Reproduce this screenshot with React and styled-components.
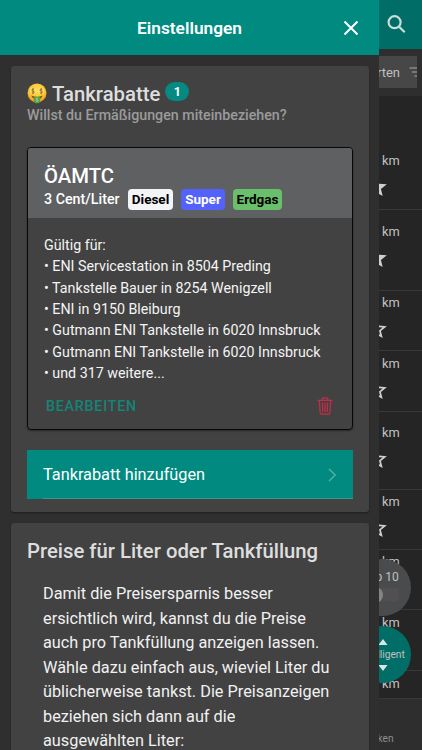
import React from "react";
import styled, { createGlobalStyle } from "styled-components";

const Global = createGlobalStyle`
  * { box-sizing: border-box; }
  body { margin: 0; background: #2e2e2e; font-family: Roboto, sans-serif; color: #fff; overflow: hidden; }
  h1, h2, h3, p, ul { margin: 0; padding: 0; font-weight: 400; }
  svg { display: block; flex: none; }
`;

const Screen = styled.div`
  display: grid;
  grid-template-columns: 379px 43px;
  width: 422px;
  height: 750px;
  overflow: hidden;
`;
const Drawer = styled.aside`
  display: flex;
  flex-direction: column;
  min-width: 0;
  height: 750px;
  overflow: hidden;
  background: #2f2f2f;
`;
const DrawerBar = styled.header`
  flex: none;
  display: grid;
  grid-template-columns: 56px 1fr 56px;
  align-items: center;
  height: 55px;
  background: #008a80;
`;
const BarTitle = styled.h1`
  grid-column: 2;
  text-align: center;
  font-size: 17.3px;
  line-height: 24px;
  && { font-weight: 600; }
`;
const CloseButton = styled.button`
  display: flex;
  justify-content: center;
  padding: 0;
  border: 0;
  background: none;
  color: #fff;
`;
const Cards = styled.main`
  display: flex;
  flex-direction: column;
  gap: 11px;
  padding: 11px 10px 0 11px;
`;
const Card = styled.section`
  flex: none;
  height: ${(p) => p.$height}px;
  padding: ${(p) => p.$top}px 16px 0;
  border-radius: 3px;
  background: #424242;
  box-shadow: 0 1px 2px rgba(0, 0, 0, 0.4);
`;
const TitleRow = styled.div`
  display: flex;
  height: 24px;
`;
const Title = styled.h2`
  white-space: nowrap;
  font-size: 20.3px;
  line-height: 24px;
  color: #dedede;
  && { font-weight: 500; }
`;
const EmojiSlot = styled.span`
  padding: 1px 5px 0 0;
`;
const Count = styled.span`
  width: 24px;
  height: 19px;
  margin-left: 5px;
  border-radius: 10px;
  background: #048a80;
  text-align: center;
  font-size: 12.5px;
  font-weight: 700;
  line-height: 19px;
`;
const Subtitle = styled.p`
  font-size: 14.25px;
  line-height: 18px;
  color: #9b9b9b;
  && { font-weight: 500; }
`;
const Discount = styled.article`
  height: 283px;
  margin-top: 23px;
  border: 1px solid #080808;
  border-radius: 4px;
  overflow: hidden;
  box-shadow: 0 1px 2px rgba(0, 0, 0, 0.4);
`;
const DiscountHead = styled.div`
  height: 70px;
  padding: 16px 16px 0;
  background: #5f6062;
`;
const DiscountName = styled.h3`
  font-size: 20.3px;
  line-height: 24px;
  && { font-weight: 500; }
`;
const RateRow = styled.div`
  display: flex;
  align-items: center;
  height: 22px;
`;
const Rate = styled.span`
  width: 84px;
  font-size: 14.25px;
  font-weight: 500;
  white-space: nowrap;
`;
const Fuel = styled.span`
  width: ${(p) => p.$width}px;
  height: 21px;
  margin-right: 8px;
  border-radius: 4px;
  background: ${(p) => p.$bg};
  color: ${(p) => p.$color};
  text-align: center;
  font-size: 13.5px;
  font-weight: 700;
  line-height: 21px;
`;
const Stations = styled.div`
  padding: 17px 16px 0;
  white-space: nowrap;
  font-size: 14.25px;
  line-height: 21.35px;
  color: #f4f4f4;
`;
const Actions = styled.div`
  display: flex;
  justify-content: space-between;
  align-items: center;
  height: 44px;
  padding: 0 19px 0 18px;
`;
const EditButton = styled.button`
  padding: 0;
  border: 0;
  background: none;
  color: #148478;
  font: 500 14.25px Roboto, sans-serif;
  letter-spacing: 0.78px;
`;
const AddButton = styled.button`
  display: flex;
  justify-content: space-between;
  align-items: center;
  width: 100%;
  height: 49px;
  margin-top: 20px;
  padding: 0 16px;
  border: 0;
  background: linear-gradient(#35998f, #35998f) 16px 100% / 100% 1px no-repeat #008a80;
  color: #fff;
  font: 400 16.3px Roboto, sans-serif;
`;
const Explanation = styled.p`
  padding: 19px 0 0 16px;
  white-space: nowrap;
  font-size: 16.3px;
  line-height: 24.5px;
  color: #f1f1f1;
`;
const Behind = styled.div`
  position: relative;
  display: flex;
  flex-direction: column;
  min-width: 0;
  height: 750px;
  overflow: hidden;
  background: #252525;
  color: #c0c0c0;
`;
const SearchBar = styled.div`
  flex: none;
  height: 49px;
  padding: 13px 0 0 6px;
  background: #006e66;
`;
const FilterBar = styled.div`
  flex: none;
  height: 47px;
  padding: 7px 5px 0 0;
  background: #2e2e2e;
`;
const FilterButton = styled.div`
  display: flex;
  justify-content: space-between;
  align-items: center;
  height: 32px;
  overflow: hidden;
  background: #474747;
  font-size: 13px;
`;
const FilterLabel = styled.span`
  margin-left: -2px;
`;
const ResultRow = styled.div`
  flex: none;
  display: flex;
  flex-direction: column;
  height: ${(p) => p.$height}px;
  padding-top: ${(p) => p.$top}px;
  overflow: hidden;
  border-bottom: 1px solid #383838;
`;
const Distance = styled.span`
  flex: none;
  padding-left: 3px;
  font-size: 12.8px;
  line-height: 16px;
`;
const StarSlot = styled.span`
  flex: none;
  margin: 5.5px 0 0 -16px;
  color: #cfcfcf;
`;
const Footer = styled.div`
  flex: 1;
  padding-top: 33px;
  background: #2e2e2e;
  color: #8f8f8f;
  font-size: 10.2px;
  line-height: 14px;
`;
const FooterLabel = styled.span`
  margin-left: -1.5px;
`;
const FloatingButton = styled.div`
  position: absolute;
  top: ${(p) => p.$top}px;
  left: -25px;
  display: flex;
  flex-direction: column;
  align-items: center;
  justify-content: center;
  gap: ${(p) => p.$gap}px;
  width: 57px;
  height: 57px;
  border-radius: 50%;
  background: ${(p) => p.$bg};
  white-space: nowrap;
  font-size: ${(p) => p.$size}px;
  line-height: 14px;
`;
const TopLabel = styled.span`
  margin: -4px 0 0 -4px;
`;
const Track = styled.span`
  display: flex;
  align-items: center;
  width: 32px;
  height: 13px;
  border-radius: 4px;
  background: #514f4f;
`;
const Thumb = styled.span`
  width: 16px;
  height: 16px;
  border-radius: 50%;
  background: #858585;
`;

const MoneyFace = () => (
  <svg width="20" height="21" viewBox="0 0 20 21">
    <defs>
      <radialGradient id="face" cx="50%" cy="35%" r="65%">
        <stop offset="0" stopColor="#ffe052" />
        <stop offset=".7" stopColor="#fbc02f" />
        <stop offset="1" stopColor="#e58c19" />
      </radialGradient>
    </defs>
    <circle cx="10" cy="10" r="9.5" fill="url(#face)" />
    <ellipse cx="5.9" cy="8.1" rx="2.9" ry="3.2" fill="#ffe375" />
    <ellipse cx="14.1" cy="8.1" rx="2.9" ry="3.2" fill="#ffe375" />
    <g fill="none" stroke="#8a6420" strokeWidth=".85">
      <path d="M7.3 6.8C6.6 5.8 4.7 6 4.7 7.1c0 1.4 2.6.7 2.6 2.1 0 1.2-2 1.3-2.7.3M6 5v6.2" />
      <path d="M15.5 6.8c-.7-1-2.6-.8-2.6.3 0 1.4 2.6.7 2.6 2.1 0 1.2-2 1.3-2.7.3M14.2 5v6.2" />
    </g>
    <path d="M4.3 12.6q5.7 2.4 11.4 0-1.4 3.9-5.7 3.9t-5.7-3.9z" fill="#8a4a14" />
    <path d="M6.9 13.7q3.1.8 6.2 0v4.3q0 2.3-3.1 2.3T6.9 18z" fill="#4fa44a" />
    <path d="M11.2 15.5c-.8-.7-2.3-.4-2.2.5.1 1 2.2.5 2.2 1.5 0 .9-1.6 1-2.3.3" fill="none" stroke="#b5df8b" strokeWidth=".8" />
  </svg>
);

const Close = () => (
  <svg width="16" height="16" viewBox="0 0 16 16" fill="none" stroke="currentColor" strokeWidth="2">
    <path d="M1.5 1.5l13 13M14.5 1.5l-13 13" />
  </svg>
);

const Trash = () => (
  <svg width="16" height="18" viewBox="0 0 16 18" fill="none" stroke="#c52c4c" strokeWidth="1.25" strokeLinecap="round" strokeLinejoin="round">
    <path d="M1 3.4h14M5.2 3.2V1.8Q5.2.9 6.1.9h3.8q.9 0 .9.9v1.4M2.3 3.6l.8 12q.1 1.5 1.5 1.5h6.8q1.4 0 1.5-1.5l.8-12M5.4 6l.3 8.6M8 6v8.6M10.6 6l-.3 8.6" />
  </svg>
);

const Chevron = () => (
  <svg width="9" height="14" viewBox="0 0 9 14" fill="none" stroke="#55b0a7" strokeWidth="1.4">
    <path d="M1 1l6.2 6L1 13" />
  </svg>
);

const Search = () => (
  <svg width="24" height="24" viewBox="0 0 24 24" fill="none" stroke="#c9dedb" strokeWidth="2.2">
    <circle cx="9.6" cy="9.2" r="6" />
    <path d="M13.9 13.5l5.8 5.8" />
  </svg>
);

const FilterLines = () => (
  <svg width="8" height="10" viewBox="0 0 8 10" stroke="#aaa" strokeWidth="1.2">
    <path d="M.5 1H8M3 5h5M5.5 9H8" />
  </svg>
);

const Star = ({ filled }) => (
  <svg width="26" height="24" viewBox="0 0 24 24" preserveAspectRatio="none" fill="currentColor">
    {filled ? (
      <path d="M12 17.27L18.18 21l-1.64-7.03L22 9.24l-7.19-.61L12 2 9.19 8.63 2 9.24l5.46 4.73L5.82 21z" />
    ) : (
      <path d="M22 9.24l-7.19-.62L12 2 9.19 8.63 2 9.24l5.46 4.73L5.82 21 12 17.27 18.18 21l-1.63-7.03L22 9.24zM12 15.4l-3.76 2.27 1-4.28-3.32-2.88 4.38-.38L12 6.1l1.71 4.04 4.38.38-3.32 2.88 1 4.28L12 15.4z" />
    )}
  </svg>
);

const Arrow = ({ down }) => (
  <svg width="10" height="6" viewBox="0 0 10 6" fill="#d5e7e5">
    <path d={down ? "M.5 0h9L5 6z" : "M5 0l4.5 6h-9z"} />
  </svg>
);

const fuels = [
  { name: "Diesel", width: 45, bg: "#f3f4f8", color: "#000" },
  { name: "Super", width: 44, bg: "#5362fb", color: "#fff" },
  { name: "Erdgas", width: 49, bg: "#6abf6c", color: "#000" },
];
const stations = [
  "ENI Servicestation in 8504 Preding",
  "Tankstelle Bauer in 8254 Wenigzell",
  "ENI in 9150 Bleiburg",
  "Gutmann ENI Tankstelle in 6020 Innsbruck",
  "Gutmann ENI Tankstelle in 6020 Innsbruck",
  "und 317 weitere...",
];
const explanation = [
  "Damit die Preisersparnis besser",
  "ersichtlich wird, kannst du die Preise",
  "auch pro Tankfüllung anzeigen lassen.",
  "Wähle dazu einfach aus, wieviel Liter du",
  "üblicherweise tankst. Die Preisanzeigen",
  "beziehen sich dann auf die",
  "ausgewählten Liter:",
];
const results = [
  { height: 114, top: 57, filled: true },
  { height: 81, top: 14, filled: true },
  { height: 60, top: 4 },
  { height: 61, top: 5 },
  { height: 78, top: 13 },
  { height: 60, top: 4 },
  { height: 60, top: 4 },
  { height: 61, top: 5 },
  { height: 28, top: 5 },
];

export default function App() {
  return (
    <Screen>
      <Global />
      <Drawer>
        <DrawerBar>
          <BarTitle>Einstellungen</BarTitle>
          <CloseButton aria-label="Schließen"><Close /></CloseButton>
        </DrawerBar>
        <Cards>
          <Card $height={446} $top={16}>
            <TitleRow>
              <EmojiSlot><MoneyFace /></EmojiSlot>
              <Title>Tankrabatte</Title>
              <Count>1</Count>
            </TitleRow>
            <Subtitle>Willst du Ermäßigungen miteinbeziehen?</Subtitle>
            <Discount>
              <DiscountHead>
                <DiscountName>ÖAMTC</DiscountName>
                <RateRow>
                  <Rate>3 Cent/Liter</Rate>
                  {fuels.map((f) => (
                    <Fuel key={f.name} $width={f.width} $bg={f.bg} $color={f.color}>{f.name}</Fuel>
                  ))}
                </RateRow>
              </DiscountHead>
              <Stations>
                <div>Gültig für:</div>
                {stations.map((s, i) => <div key={i}>• {s}</div>)}
              </Stations>
              <Actions>
                <EditButton>BEARBEITEN</EditButton>
                <Trash />
              </Actions>
            </Discount>
            <AddButton>Tankrabatt hinzufügen<Chevron /></AddButton>
          </Card>
          <Card $height={260} $top={16}>
            <Title>Preise für Liter oder Tankfüllung</Title>
            <Explanation>
              {explanation.map((line) => <React.Fragment key={line}>{line}<br /></React.Fragment>)}
            </Explanation>
          </Card>
        </Cards>
      </Drawer>
      <Behind>
        <SearchBar><Search /></SearchBar>
        <FilterBar>
          <FilterButton><FilterLabel>rten</FilterLabel><FilterLines /></FilterButton>
        </FilterBar>
        {results.map((r, i) => (
          <ResultRow key={i} $height={r.height} $top={r.top}>
            <Distance>km</Distance>
            <StarSlot><Star filled={r.filled} /></StarSlot>
          </ResultRow>
        ))}
        <Footer><FooterLabel>ken</FooterLabel></Footer>
        <FloatingButton $top={559} $bg="#4a4b4d" $gap={4} $size={12}>
          <TopLabel>Top 10</TopLabel>
          <Track><Thumb /></Track>
        </FloatingButton>
        <FloatingButton $top={626} $bg="#006e66" $gap={3} $size={10.2}>
          <Arrow />
          <span>Intelligent</span>
          <Arrow down />
        </FloatingButton>
      </Behind>
    </Screen>
  );
}
